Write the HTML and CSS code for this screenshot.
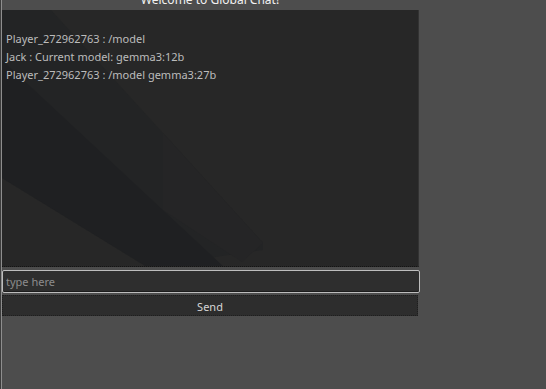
FILE: index.html
```html
<!DOCTYPE html>
<html lang="en">
<head>
    <meta charset="UTF-8">
    <meta name="viewport" content="width=device-width, initial-scale=1.0">
    <title>Global Chat</title>
    <link rel="stylesheet" href="styles.css">
</head>
<body>
    <div class="screen">
        <div class="edge"></div>
        <div class="chat">
            <div class="title"><span>Welcome to Global Chat!</span></div>
            <div class="log">
                <!-- background light shapes -->
                <svg class="shade" width="416" height="257" viewBox="0 0 416 257">
                    <polygon points="0,0 49,0 261,233 261,240 145,257 0,168" fill="#232425"/>
                    <polygon points="161,123 261,233 240,252 161,200" fill="#252526"/>
                    <polygon points="0,50 222,257 145,257 0,168" fill="#1f2022"/>
                </svg>
                <div class="msg">Player_272962763 : /model</div>
                <div class="msg">Jack : Current model: gemma3:12b</div>
                <div class="msg">Player_272962763 : /model gemma3:27b</div>
            </div>
            <input class="entry" type="text" placeholder="type here">
            <button class="send">Send</button>
        </div>
    </div>
</body>
</html>
```

FILE: styles.css
```css
body {
    margin: 0;
    background: #4d4d4d;
    font-family: "Noto Sans", "DejaVu Sans", sans-serif;
    overflow: hidden;
}
.screen {
    display: flex;
    height: 389px;
}
.edge {
    width: 2px;
    background: linear-gradient(to right, #3c3c3c 50%, #8e8e8e 50%);
}
.chat {
    display: flex;
    flex-direction: column;
    width: 418px;
}
.title {
    height: 10px;
    text-align: center;
    width: 416px;
    color: #f2f2f2;
    font-size: 12px;
    line-height: 13px;
}
.title span {
    display: block;
    margin-top: -7px;
}
.log {
    position: relative;
    width: 412px;
    height: 236px;
    padding: 20px 0 0 4px;
    background: #272727;
    border-right: 1px solid #333;
    border-bottom: 1px dotted #141414;
    box-sizing: content-box;
    margin-right: 1px;
    overflow: hidden;
}
.shade {
    position: absolute;
    left: 0;
    top: 0;
}
.msg {
    position: relative;
    color: #bcbcbc;
    font-size: 11px;
    line-height: 18px;
}
.entry {
    margin: 3px 0 0 0;
    height: 23px;
    box-sizing: border-box;
    width: 418px;
    background: #2e2e2e;
    border: 1px solid #bdbdbd;
    border-radius: 2px;
    box-shadow: inset 0 -1px 0 #1c1c1c;
    padding: 0 3px;
    color: #ddd;
    font-family: inherit;
    font-size: 11px;
    outline: none;
}
.entry::placeholder {
    color: #8c8c8c;
}
.send {
    margin-top: 2px;
    height: 21px;
    width: 416px;
    background: #2d2d2d;
    border: 1px dotted #1e1e1e;
    color: #d6d6d6;
    font-family: inherit;
    font-size: 11px;
    padding: 1px 0 0 0;
}
```
